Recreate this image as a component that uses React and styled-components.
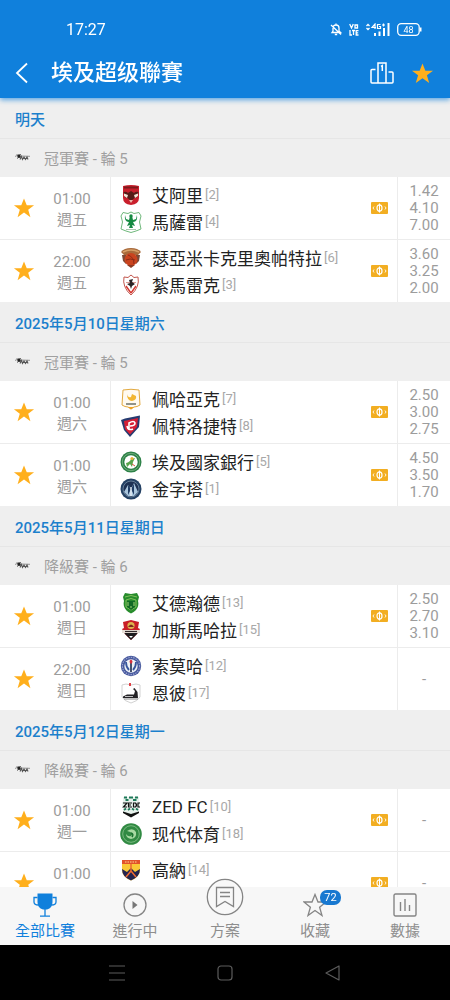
import React from 'react';
import styled, { createGlobalStyle } from 'styled-components';

const GlobalStyle = createGlobalStyle`
  * {
    box-sizing: border-box;
  }

  body {
    margin: 0;
    background: #fff;
    font-family: Roboto, "Noto Sans CJK TC", sans-serif;
  }

  button {
    padding: 0;
    border: 0;
    background: none;
    color: inherit;
    font: inherit;
    cursor: pointer;
  }

  svg {
    display: block;
    flex: none;
  }
`;

const Screen = styled.div`
  display: flex;
  flex-direction: column;
  height: 100vh;
  overflow: hidden;
`;

const TopArea = styled.header`
  position: relative;
  z-index: 1;
  background: #1080dc;
  color: #fff;
  box-shadow: 0 2px 5px rgba(16, 128, 220, 0.65);
`;

const StatusBar = styled.div`
  display: flex;
  align-items: center;
  justify-content: space-between;
  height: 48px;
  padding: 10px 28px 0 66px;
  font-size: 16px;
`;

const StatusIcons = styled.div`
  display: flex;
  align-items: center;
  gap: 7px;
`;

const TitleBar = styled.div`
  display: flex;
  align-items: center;
  height: 50px;
  padding: 0 16px 0 14px;
`;

const IconButton = styled.button`
  display: flex;
  align-items: center;
  justify-content: center;
`;

const Title = styled.h1`
  flex: 1;
  margin: 0 0 0 21px;
  font-size: 22px;
  font-weight: 500;
  line-height: 30px;
`;

const TitleActions = styled.div`
  display: flex;
  gap: 17px;
`;

const MatchList = styled.main`
  flex: 1;
  min-height: 0;
  overflow-y: auto;
  scrollbar-width: none;
`;

const DateHeading = styled.h2`
  display: flex;
  align-items: center;
  height: 41px;
  margin: 0;
  padding: 0 15px;
  border-bottom: 1px solid #e6e6e6;
  background: #efefef;
  color: #1c80cc;
  font-size: 15px;
  font-weight: 500;
`;

const RoundHeading = styled.h3`
  display: flex;
  align-items: center;
  gap: 13px;
  height: 38px;
  margin: 0;
  padding: 0 15px 2px;
  background: #efefef;
  color: #a0a0a0;
  font-size: 15px;
  font-weight: 400;
`;

const Matches = styled.ul`
  margin: 0;
  padding: 0;
  list-style: none;
`;

const Match = styled.li`
  display: grid;
  grid-template-columns: 110px 1fr 36px 53px;
  background: #fff;

  & + & {
    border-top: 1px solid #ececec;
  }
`;

const Kickoff = styled.div`
  display: grid;
  grid-template-columns: 34px 76px;
  align-items: center;
  height: 62px;
`;

const FavButton = styled(IconButton)`
  padding-left: 13px;
`;

const When = styled.div`
  padding-top: 4px;
  color: #9c9c9c;
  font-size: 15px;
  line-height: 21px;
  text-align: center;
`;

const Teams = styled.div`
  padding: 4px 0 4px 9px;
  border-left: 1px solid #ececec;
`;

const Team = styled.div`
  display: flex;
  align-items: center;
  height: 27px;
  color: #222;
  font-size: 17px;
  white-space: nowrap;
`;

const TeamName = styled.span`
  margin-left: 10px;
`;

const Rank = styled.span`
  margin-left: 2px;
  color: #a8a8a8;
  font-size: 13px;
`;

const MoneyCell = styled.div`
  display: flex;
  align-items: center;
  justify-content: center;
`;

const Odds = styled.div`
  display: flex;
  flex-direction: column;
  align-items: center;
  justify-content: center;
  border-left: 1px solid #ececec;
  color: #9c9c9c;
  font-size: 15px;
  line-height: 17px;
`;

const TabBar = styled.nav`
  position: relative;
  display: grid;
  grid-template-columns: repeat(5, 1fr);
  grid-template-rows: 100%;
  height: 58px;
  background: #f7f7f7;
`;

const Tab = styled.button`
  display: flex;
  flex-direction: column;
  align-items: center;
  justify-content: flex-end;
  gap: ${props => (props.$raised ? 4 : 3)}px;
  height: 100%;
  padding-bottom: 3px;
  color: ${props => (props.$active ? '#1080dc' : '#8e8e8e')};
  font-size: 15px;
  line-height: 22px;
`;

const TabIcon = styled.span`
  position: relative;
`;

const Badge = styled.span`
  position: absolute;
  top: -3px;
  left: 17px;
  width: 21px;
  border-radius: 7px;
  background: #1878d0;
  color: #fff;
  font-size: 11px;
  line-height: 15px;
  text-align: center;
`;

const SystemBar = styled.div`
  display: flex;
  align-items: center;
  justify-content: center;
  gap: 84px;
  height: 55px;
  background: #000;
`;

const STAR = 'M12 1.5 15 9H23L16.6 13.8 19 22 12 17 5 22 7.4 13.8 1 9H9Z';

const Star = ({ size }) => (
  <svg width={size} height={size} viewBox="0 0 24 24" fill="#ffaf1c">
    <path d={STAR} />
  </svg>
);

const Money = () => (
  <svg width="17" height="12" viewBox="0 0 17 12">
    <rect width="17" height="12" rx="1" fill="#f2ae22" />
    <ellipse cx="8.5" cy="6" rx="2.5" ry="3.2" fill="none" stroke="#fff" strokeWidth="1.2" />
    <path d="M8.5 1.5v9" stroke="#fff" strokeWidth="1" />
    <path d="M3 4.5 2 6 3 7.5M14 4.5 15 6 14 7.5" fill="none" stroke="#fff" strokeWidth=".9" />
  </svg>
);

// small league mark next to the round name
const LeagueMark = () => (
  <svg width="16" height="10" viewBox="0 0 16 10">
    <path d="M0 4.500 3 3l1-1 1 2 10 .3" fill="none" stroke="#888" strokeWidth=".9" />
    <path d="M2 2.500 5.500 6M5.500 2 2.500 6.500" stroke="#333" strokeWidth="1" />
    <circle cx="4" cy="4.300" r="1.500" fill="#222" />
    <path d="M5 7.500 6.500 4.500 7.500 7.500 9 5 10.500 7.500 12 5 13 7.500" fill="none" stroke="#555" strokeWidth="1.100" />
  </svg>
);

const SHIELD = 'M3.5 2.5Q11 .5 18.5 2.5V13Q18.5 18 11 21.5 3.5 18 3.5 13Z';

const crestArt = {
  ahly: (
    <>
      <path d="M3 2Q11 0 19 2V14Q19 20 11 21 3 20 3 14Z" fill="#c91f2c" />
      <path d="M4 3.5h14" stroke="#7d1a1c" strokeWidth="2" />
      <path d="M3.5 8Q6 7 8 9l3-2 3 2q2-2 4.500-1l-1 5-3 1-3.500 3-3.500-3-3-1Z" fill="#571d18" />
      <path d="M4 9.500 8 11 7 14 4 12ZM18 9.500 14 11 15 14 18 12Z" fill="#f3e6d8" />
      <path d="M9 16h4l-2 3Z" fill="#e9b5a8" />
    </>
  ),
  masry: (
    <>
      <path d="M3 1.5 8 2.500 11 1 14 2.500 19 1.500 21 5 19.500 11 21 18 16 20 11 21.500 6 20 1 18 2.500 11 1 5Z" fill="#fff" stroke="#70b87c" />
      <path d="M5 4Q4 11 9 11l-2 4 3-1-1 3h4l-1-3 3 1-2-4Q18 11 17 4l-1 4-3 1-1-4h-2L9 9 6 8Z" fill="#168a42" />
      <circle cx="11" cy="5" r="1.700" fill="#168a42" />
      <path d="M6 18.500h10" stroke="#a9c8ae" />
    </>
  ),
  ceramica: (
    <>
      <path d="M1 5Q4 1 11 1T21 5L18 8H4Z" fill="#a86a3b" />
      <path d="M3 5Q11 1 19 5" fill="none" stroke="#d7a067" strokeWidth="1.400" />
      <path d="M2 8h4v9l-3-3ZM20 8h-4v9l3-3Z" fill="#7c4936" />
      <circle cx="11" cy="12.500" r="6.500" fill="#c9431e" />
      <path d="M8 8Q14 10 14 17M6 13q4-2 9 0" fill="none" stroke="#8b2b18" />
      <path d="M7 18 11 21l4-3Z" fill="#8b3a22" />
    </>
  ),
  zamalek: (
    <>
      <path d="M4 3 8 3.500 11 1 14 3.500 18 3Q20 13 11 21 2 13 4 3Z" fill="#fff" stroke="#c2564d" />
      <path d="M6 8.500h10" stroke="#dc9b94" />
      <path d="M9 6 13 5 12 8l3 2-3 2-1 3-1-3-3-2 3-1Z" fill="#2b2325" />
      <path d="M6 12 11 19M16 12 11 19" stroke="#d5362f" strokeWidth="1.400" />
    </>
  ),
  pharco: (
    <>
      <path d="M3 2Q11 .5 19 2L20 17Q17 19 14 19L11 21 8 19Q5 19 2 17Z" fill="#fffaf0" stroke="#e2a93f" />
      <path d="M8 19h6l-3 2.500Z" fill="#f1a222" />
      <path d="M7 6q1 4 4 3l1-3 4 2q1 4-4 5-5 0-5-7Z" fill="#f2b632" />
      <path d="M6 16h10" stroke="#62665c" strokeWidth="1.400" />
    </>
  ),
  petrojet: (
    <>
      <path d="M1 5 5 3.500 20 .5 19 12 10 22 4 15Z" fill="#263b70" />
      <path d="M4 6 18 3 17 12 10 19.500 5 14Z" fill="#d51f36" />
      <path d="M9 15V8q5-3 6 0 0 3-5 3M7 11q1 5 6 3" fill="none" stroke="#fff" strokeWidth="1.600" />
    </>
  ),
  bank: (
    <>
      <circle cx="11" cy="11" r="10.500" fill="#2c8147" />
      <circle cx="11" cy="11" r="8.700" fill="none" stroke="#8dbe91" strokeWidth=".7" />
      <circle cx="11" cy="11" r="6.700" fill="#fff" />
      <path d="M6 12q4-1 5-4l4-1-2 4-1 5-2-3-3 3Z" fill="#58a44b" />
      <circle cx="12" cy="7.500" r="1.600" fill="#e9b13b" />
      <path d="m12 13 3 2" stroke="#d55339" />
    </>
  ),
  pyramids: (
    <>
      <circle cx="11" cy="11" r="10.500" fill="#244164" />
      <circle cx="11" cy="11" r="8" fill="#1d3153" stroke="#7990a8" strokeWidth=".8" />
      <path d="M4 14 8 7 11 11 14 5 18 14 14 18H8Z" fill="#a9c5dc" />
      <path d="M8 7v10l3-6ZM14 6v11l-3-6Z" fill="#203c64" />
      <path d="M11 9v9" stroke="#e8f0f5" strokeWidth="1.400" />
    </>
  ),
  ittihad: (
    <>
      <path d="M5 1 11 2 17 1 19 5 18 9Q20 17 11 21.500 2 17 4 9L3 5Z" fill="#278c2c" />
      <path d="M5 5Q11 2 17 5M6 8q5-3 10 0v7l-5 3-5-3Z" fill="none" stroke="#99ce68" strokeWidth=".8" />
      <path d="M7 9h8v6l-4 3-4-3Z" fill="#116b25" />
      <path d="M8 10v4M11 14v2M14 10v4" stroke="#a6d776" />
    </>
  ),
  ghazl: (
    <>
      <path d="M3 3 11 1 19 3 18 9 20 10 17 15 11 21 5 15 2 10 4 9Z" fill="#c91e27" />
      <path d="M4 13h14l-1 2-6 6-6-6Z" fill="#1d1b1d" />
      <path d="M2 11h18v3H2Z" fill="#e9e0d8" />
      <path d="M5 12.500h12" stroke="#33292b" strokeWidth="1.200" />
      <circle cx="11" cy="6.500" r="3.600" fill="#ddb34d" />
      <path d="M8 8q3-5 6 0Z" fill="#7d251e" />
      <path d="M9 17h4l-2 2Z" fill="#fff" />
    </>
  ),
  smouha: (
    <>
      <circle cx="11" cy="11" r="10.200" fill="#46589d" />
      <circle cx="11" cy="11" r="8.600" fill="none" stroke="#98a2cf" strokeWidth="1.200" strokeDasharray="1.500 1" />
      <circle cx="11" cy="11" r="6.700" fill="#edf1f6" />
      <path d="M6 7q0 5 3 8M16 7q0 5-3 8" fill="none" stroke="#38569f" strokeWidth="1.800" />
      <path d="M11 8v9" stroke="#1c2b4f" strokeWidth="1.600" />
      <path d="M11 4.500q3 2 0 4.500-3-2.500 0-4.500" fill="#d72f3b" />
    </>
  ),
  enppi: (
    <>
      <path d="M2 3 6 2 11 3 16 2 20 3V15Q18 19 11 21 4 19 2 15Z" fill="#fff" stroke="#d2d2d2" />
      <path d="M3 14.500 7 12.500 14 12.500 15 9 13 7 14.500 6 17.500 10 18 16H3Z" fill="#242326" />
      <path d="M5 14.500h8" stroke="#fff" strokeWidth=".7" />
      <path d="M10 1v3" stroke="#e02e34" strokeWidth="1.800" />
      <path d="M4 17h14" stroke="#858585" />
    </>
  ),
  zed: (
    <>
      <path d="M3 1h16v15l-8 5-8-5Z" fill="#e7f2ec" />
      <path d="M4 1.500h3M9 1.500h4M15 1.500h3M5.500 4h3M13 4h3.500M4 14l2-1.500M8 14l2-1.500M12 12.500 14 14M16 12.500 18 14" fill="none" stroke="#1e7959" strokeWidth="1.800" />
      <path d="M2 6h18v6H2Z" fill="#e7f2ec" />
      <path d="M3 7h4L3.500 11H7M12 7H8.500v4H12M8.500 9H11M13.500 7h2q2 2 0 4h-2ZM20 7h-2v4h2" fill="none" stroke="#111" strokeWidth="1.200" />
      <path d="M3 15.500 11 18l8-2.500V17l-8 4.500L3 17Z" fill="#111" />
    </>
  ),
  future: (
    <>
      <circle cx="11" cy="11" r="10.800" fill="#318a43" />
      <circle cx="11" cy="11" r="8.300" fill="none" stroke="#8cc68f" strokeWidth=".8" />
      <path d="M7 8q6-4 9 1 1 6-5 7-5-1-5-5 2 3 5 2 4-3-4-5Z" fill="#a7d9a2" />
      <path d="M11 10q3 1 1 4" fill="none" stroke="#1c7332" strokeWidth="1.600" />
    </>
  ),
  gouna: (
    <>
      <path d="M2 1h18v10q0 7-9 10.500Q2 18 2 11Z" fill="#fac936" />
      <path d="M2 1h18v4H2Z" fill="#e2532b" />
      <path d="M5 3h12" stroke="#ffd890" strokeDasharray="1.500 1" />
      <path d="M2 10 7 13 11 9 15 13 20 10Q20 18 11 21.500 2 18 2 10Z" fill="#25244e" />
      <path d="M11 5v8M6 18 11 12l5 6" stroke="#ed6b32" strokeWidth="1.500" fill="none" />
    </>
  ),
  red: (
    <>
      <path d={SHIELD} fill="#c94459" />
      <path d="M7 6h8v8l-4 4-4-4Z" fill="#fff" />
    </>
  ),
};

const Crest = ({ name }) => (
  <svg width="22" height="22" viewBox="0 0 22 22">{crestArt[name]}</svg>
);

const days = [
  {
    date: '明天',
    round: '冠軍賽 - 輪 5',
    matches: [
      { time: '01:00', day: '週五', money: true, odds: ['1.42', '4.10', '7.00'], teams: [['ahly', '艾阿里', 2], ['masry', '馬薩雷', 4]] },
      { time: '22:00', day: '週五', money: true, odds: ['3.60', '3.25', '2.00'], teams: [['ceramica', '瑟亞米卡克里奧帕特拉', 6], ['zamalek', '紮馬雷克', 3]] },
    ],
  },
  {
    date: '2025年5月10日星期六',
    round: '冠軍賽 - 輪 5',
    matches: [
      { time: '01:00', day: '週六', money: true, odds: ['2.50', '3.00', '2.75'], teams: [['pharco', '佩哈亞克', 7], ['petrojet', '佩特洛捷特', 8]] },
      { time: '01:00', day: '週六', money: true, odds: ['4.50', '3.50', '1.70'], teams: [['bank', '埃及國家銀行', 5], ['pyramids', '金字塔', 1]] },
    ],
  },
  {
    date: '2025年5月11日星期日',
    round: '降級賽 - 輪 6',
    matches: [
      { time: '01:00', day: '週日', money: true, odds: ['2.50', '2.70', '3.10'], teams: [['ittihad', '艾德瀚德', 13], ['ghazl', '加斯馬哈拉', 15]] },
      { time: '22:00', day: '週日', money: false, odds: ['-'], teams: [['smouha', '索莫哈', 12], ['enppi', '恩彼', 17]] },
    ],
  },
  {
    date: '2025年5月12日星期一',
    round: '降級賽 - 輪 6',
    matches: [
      { time: '01:00', day: '週一', money: true, odds: ['-'], teams: [['zed', 'ZED FC', 10], ['future', '现代体育', 18]] },
      { time: '01:00', day: '週一', money: true, odds: ['-'], teams: [['gouna', '高納', 14], ['red']] },
    ],
  },
];

const MatchRow = ({ match }) => (
  <Match>
    <Kickoff>
      <FavButton aria-label="收藏"><Star size={22} /></FavButton>
      <When>
        <div>{match.time}</div>
        <div>{match.day}</div>
      </When>
    </Kickoff>
    <Teams>
      {match.teams.map(([crest, name, rank]) => (
        <Team key={crest}>
          <Crest name={crest} />
          {name && <TeamName>{name}</TeamName>}
          {rank && <Rank>[{rank}]</Rank>}
        </Team>
      ))}
    </Teams>
    <MoneyCell>{match.money && <Money />}</MoneyCell>
    <Odds>
      {match.odds.map(value => <span key={value}>{value}</span>)}
    </Odds>
  </Match>
);

const StatusRow = () => (
  <StatusBar>
    <span>17:27</span>
    <StatusIcons>
      <svg width="12" height="13" viewBox="0 0 12 13" fill="none" stroke="#fff" strokeWidth="1.300">
        <path d="M2 9.500 3 8V5q0-3 3-3t3 3v3l1.500 1.500ZM4.800 11.500h2.400M6 .5V2M1 2l10 9.500" />
      </svg>
      <svg width="10" height="13" viewBox="0 0 10 13" fill="none" stroke="#fff" strokeWidth="1.300">
        <path d="M.7 1 2.500 5 4.300 1M6 2h2.500v3H6ZM1 7v5h2M3 7.500h3M4.500 7.500V12M9.500 7.600H7.200V12h2.300M7.200 9.800h2" />
      </svg>
      <svg width="24" height="13" viewBox="0 0 24 13" fill="none" stroke="#fff">
        <path d="M.5 3 2 1.500 3.500 3M.5 5 2 6.500 3.500 5" strokeWidth="1.300" />
        <path d="M9 6V1L6 4.500h4M14.500 1.500h-3v4h3V3.500H13M16 2h3M17.500 .5v3" strokeWidth="1.200" />
        <path d="M9 10v3M13.500 8.500V13M18 5v8M22.500 0v13" strokeWidth="2" />
      </svg>
      <svg width="25" height="13" viewBox="0 0 25 13">
        <rect x=".7" y=".7" width="21.500" height="11.600" rx="3.500" fill="none" stroke="#fff" strokeWidth="1.300" />
        <path d="M23.700 4.500v4" stroke="#fff" strokeWidth="1.600" />
        <text x="11.500" y="9.700" fill="#fff" fontSize="9" textAnchor="middle">48</text>
      </svg>
    </StatusIcons>
  </StatusBar>
);

const tabs = [
  {
    label: '全部比賽',
    active: true,
    icon: (
      <svg width="24" height="24" viewBox="0 0 24 24">
        <path d="M4.500.5h15V9q0 6-5.500 7.500h-4Q4.500 15 4.500 9Z" fill="#1080dc" />
        <path d="M4.500 4.500H1V9q0 3 4.500 3M19.500 4.500H23V9q0 3-4.500 3M12 16v7M7 23.200h10" fill="none" stroke="#1080dc" strokeWidth="1.300" />
      </svg>
    ),
  },
  {
    label: '進行中',
    icon: (
      <svg width="24" height="24" viewBox="0 0 24 24">
        <circle cx="12" cy="12" r="11" fill="none" stroke="#858585" strokeWidth="1.300" />
        <path d="M9.500 8v8l5-4Z" fill="#777" />
      </svg>
    ),
  },
  {
    label: '方案',
    raised: true,
    icon: (
      <svg width="38" height="38" viewBox="0 0 38 38" fill="none" stroke="#858585" strokeWidth="1.300">
        <circle cx="19" cy="19" r="17.700" fill="#f8f8f8" />
        <path d="M10.500 9.500h17v19L19 23.500l-8.500 5ZM14 14.500h10M14 18.500h10" />
      </svg>
    ),
  },
  {
    label: '收藏',
    badge: 72,
    icon: (
      <svg width="24" height="24" viewBox="0 0 24 24" fill="none" stroke="#858585" strokeWidth="1.300">
        <path d="M12 1.500 15 9H23L16.600 14.200 19 22.500 12 17.500 5 22.500 7.400 14.200 1 9H9Z" />
      </svg>
    ),
  },
  {
    label: '數據',
    icon: (
      <svg width="24" height="24" viewBox="0 0 24 24" fill="none" stroke="#858585" strokeWidth="1.400">
        <rect x="1" y="1" width="22" height="22" rx="1.500" />
        <path d="M7.500 9v9M12 6v12M16.500 12v6" />
      </svg>
    ),
  },
];

const App = () => (
  <Screen>
    <GlobalStyle />
    <TopArea>
      <StatusRow />
      <TitleBar>
        <IconButton aria-label="返回">
          <svg width="16" height="22" viewBox="0 0 16 22" fill="none" stroke="#fff" strokeWidth="1.800">
            <path d="M13 1.500 3 11l10 9.500" />
          </svg>
        </IconButton>
        <Title>埃及超级聯賽</Title>
        <TitleActions>
          <IconButton aria-label="排名">
            <svg width="24" height="22" viewBox="0 0 24 22" fill="none" stroke="#fff" strokeWidth="1.500">
              <path d="M8 21V1h8v20M5.500 7.500H2q-1 0-1 1V20q0 1 1 1h20q1 0 1-1v-9q0-1-1-1h-3.500M11 4.500l1.300-.8V9" />
            </svg>
          </IconButton>
          <IconButton aria-label="收藏聯賽"><Star size={23} /></IconButton>
        </TitleActions>
      </TitleBar>
    </TopArea>

    <MatchList>
      {days.map(({ date, round, matches }) => (
        <section key={date}>
          <DateHeading>{date}</DateHeading>
          <RoundHeading><LeagueMark />{round}</RoundHeading>
          <Matches>
            {matches.map(match => <MatchRow key={match.teams[0][0]} match={match} />)}
          </Matches>
        </section>
      ))}
    </MatchList>

    <TabBar>
      {tabs.map(({ label, icon, badge, active, raised }) => (
        <Tab key={label} $active={active} $raised={raised}>
          <TabIcon>
            {icon}
            {badge && <Badge>{badge}</Badge>}
          </TabIcon>
          {label}
        </Tab>
      ))}
    </TabBar>

    <SystemBar>
      <IconButton aria-label="選單">
        <svg width="24" height="16" viewBox="0 0 24 16" stroke="#5c5c5c" strokeWidth="1.200">
          <path d="M4 1h16M4 8h16M4 15h16" />
        </svg>
      </IconButton>
      <IconButton aria-label="主頁">
        <svg width="24" height="16" viewBox="0 0 24 16" fill="none" stroke="#5c5c5c" strokeWidth="1.200">
          <rect x="5" y="1" width="14" height="14" rx="3" />
        </svg>
      </IconButton>
      <IconButton aria-label="後退">
        <svg width="24" height="16" viewBox="0 0 24 16" fill="none" stroke="#5c5c5c" strokeWidth="1.200" strokeLinejoin="round">
          <path d="M18 1v14L5 8Z" />
        </svg>
      </IconButton>
    </SystemBar>
  </Screen>
);

export default App;
